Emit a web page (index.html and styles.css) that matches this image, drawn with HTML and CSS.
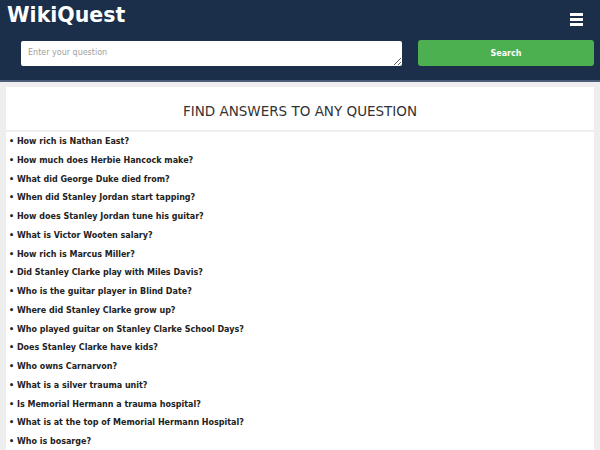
FILE: index.html
```html
<!DOCTYPE html>
<html>

<head>
    <link rel="stylesheet" href="styles.css">
</head>

<body>
    <div class="header">
        <div class="topbar">
            <h1 class="logo">WikiQuest</h1>
            <div class="menu">
                <span></span>
                <span></span>
                <span></span>
            </div>
        </div>
        <div class="searchrow">
            <textarea class="question" placeholder="Enter your question"></textarea>
            <button class="search">Search</button>
        </div>
    </div>

    <div class="card">
        <h2 class="title">FIND ANSWERS TO ANY QUESTION</h2>
        <ul class="questions">
            <li>&bull; How rich is Nathan East?</li>
            <li>&bull; How much does Herbie Hancock make?</li>
            <li>&bull; What did George Duke died from?</li>
            <li>&bull; When did Stanley Jordan start tapping?</li>
            <li>&bull; How does Stanley Jordan tune his guitar?</li>
            <li>&bull; What is Victor Wooten salary?</li>
            <li>&bull; How rich is Marcus Miller?</li>
            <li>&bull; Did Stanley Clarke play with Miles Davis?</li>
            <li>&bull; Who is the guitar player in Blind Date?</li>
            <li>&bull; Where did Stanley Clarke grow up?</li>
            <li>&bull; Who played guitar on Stanley Clarke School Days?</li>
            <li>&bull; Does Stanley Clarke have kids?</li>
            <li>&bull; Who owns Carnarvon?</li>
            <li>&bull; What is a silver trauma unit?</li>
            <li>&bull; Is Memorial Hermann a trauma hospital?</li>
            <li>&bull; What is at the top of Memorial Hermann Hospital?</li>
            <li>&bull; Who is bosarge?</li>
        </ul>
    </div>
</body>

</html>
```

FILE: styles.css
```css
* {
    box-sizing: border-box;
}

body {
    margin: 0;
    background-color: #eeeeee;
    font-family: "DejaVu Sans", sans-serif;
}

.header {
    background-color: #1c2f4a;
    height: 82px;
    border-bottom: 2px solid #4b5d76;
}

.topbar {
    display: flex;
    justify-content: space-between;
    align-items: flex-start;
    padding: 2px 17px 0 7px;
    height: 40px;
}

.logo {
    margin: 0;
    color: white;
    font-size: 20.5px;
    font-weight: bold;
    line-height: 26px;
}

.menu {
    display: flex;
    flex-direction: column;
    gap: 2px;
    margin-top: 11px;
}

.menu span {
    display: block;
    width: 13px;
    height: 3px;
    background-color: white;
}

.searchrow {
    display: flex;
    align-items: flex-start;
    padding: 0 6px 0 21px;
    gap: 16px;
}

.question {
    width: 381px;
    height: 25px;
    margin-top: 1px;
    padding: 7px 7px 0 7px;
    border: none;
    border-radius: 2px;
    font-family: "DejaVu Sans", sans-serif;
    font-size: 8px;
    resize: vertical;
}

.question::placeholder {
    color: #a0a0a0;
}

.search {
    flex: 1;
    height: 26px;
    background-color: #4caf50;
    color: white;
    border: none;
    border-radius: 3px;
    font-family: "DejaVu Sans", sans-serif;
    font-size: 8px;
    font-weight: bold;
}

.card {
    margin: 5px 6px 0 6px;
    background-color: white;
}

.title {
    margin: 0;
    height: 45px;
    border-bottom: 2px solid #eeeeee;
    padding-top: 16px;
    text-align: center;
    font-weight: normal;
    font-size: 13.5px;
    color: #333333;
}

.questions {
    list-style: none;
    margin: 0;
    padding: 1px 0 0 3px;
}

.questions li {
    font-size: 8px;
    font-weight: bold;
    color: #222222;
    line-height: 18.75px;
}
```
